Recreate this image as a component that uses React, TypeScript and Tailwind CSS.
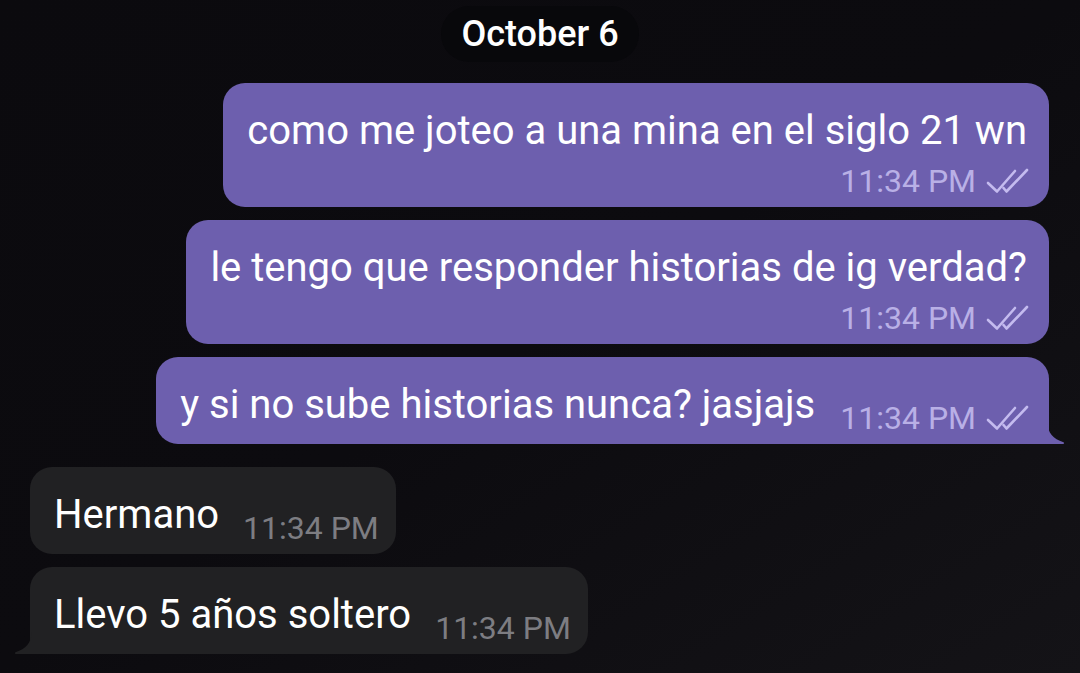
import type { ReactNode } from 'react'

type Side = 'out' | 'in'

function Checks() {
  return (
    <svg width="44" height="26" viewBox="0 0 44 26" fill="none" className="shrink-0">
      <path d="M2 15 L11 23.5 L29 3" stroke="#c4bbef" strokeWidth="2.6" strokeLinecap="round" strokeLinejoin="round" />
      <path d="M17.5 20 L20.5 23.5 L41 2" stroke="#c4bbef" strokeWidth="2.6" strokeLinecap="round" strokeLinejoin="round" />
    </svg>
  )
}

function Tail({ side }: { side: Side }) {
  if (side === 'out') {
    return (
      <svg width="18" height="22" viewBox="0 0 18 22" className="absolute bottom-0 right-[-16px]">
        <path d="M0 0 C1 11 6 17 16.5 20.2 C17.5 20.6 17.3 22 16 22 L0 22 Z" fill="#6d5fae" />
      </svg>
    )
  }
  return (
    <svg width="18" height="22" viewBox="0 0 18 22" className="absolute bottom-0 left-[-16px]">
      <path d="M18 0 C17 11 12 17 1.5 20.2 C0.5 20.6 0.7 22 2 22 L18 22 Z" fill="#212123" />
    </svg>
  )
}

function Bubble({ side, tail, children }: { side: Side; tail?: boolean; children: ReactNode }) {
  const base = side === 'out' ? 'bg-[#6d5fae]' : 'bg-[#212123]'
  const corners = tail
    ? side === 'out'
      ? 'rounded-[22px] rounded-br-none'
      : 'rounded-[22px] rounded-bl-none'
    : 'rounded-[22px]'
  return (
    <div className={`relative ${base} ${corners} pt-[25px] pb-[8px]`}>
      {children}
      {tail && <Tail side={side} />}
    </div>
  )
}

function OutTime() {
  return (
    <div className="flex items-center gap-[10px]">
      <span className="text-[32px] leading-[36px] text-[#b9b0e6]">11:34 PM</span>
      <Checks />
    </div>
  )
}

function InTime() {
  return <span className="ml-[24px] text-[32px] leading-[36px] text-[#7d7d82]">11:34 PM</span>
}

export default function App() {
  return (
    <div
      className="h-[673px] w-[1080px] overflow-hidden bg-gradient-to-br from-[#0b0a0e] via-[#0c0b0f] to-[#141317] text-white"
      style={{ fontFamily: 'Roboto, "Noto Sans", sans-serif' }}
    >
      <div className="flex justify-center pt-[6px]">
        <div className="rounded-full bg-[#08080b] px-[20px] py-[6px] text-[36px] font-medium leading-[44px]">
          October 6
        </div>
      </div>

      <div className="mt-[21px] flex flex-col items-end gap-[13px] pr-[31px]">
        <Bubble side="out">
          <div className="flex flex-col pl-[24px] pr-[19px]">
            <span className="pr-[3px] text-[40px] leading-[46px]">como me joteo a una mina en el siglo 21 wn</span>
            <div className="mt-[9px] flex justify-end">
              <OutTime />
            </div>
          </div>
        </Bubble>
        <Bubble side="out">
          <div className="flex flex-col pl-[24px] pr-[19px]">
            <span className="pr-[3px] text-[40px] leading-[46px]">le tengo que responder historias de ig verdad?</span>
            <div className="mt-[9px] flex justify-end">
              <OutTime />
            </div>
          </div>
        </Bubble>
        <Bubble side="out" tail>
          <div className="flex items-end pl-[24px] pr-[19px]">
            <span className="mb-[8px] text-[40px] leading-[46px]">y si no sube historias nunca? jasjajs</span>
            <div className="ml-[25px]">
              <OutTime />
            </div>
          </div>
        </Bubble>
      </div>

      <div className="mt-[23px] flex flex-col items-start gap-[13px] pl-[30px]">
        <Bubble side="in">
          <div className="flex items-end pl-[24px] pr-[17px]">
            <span className="mb-[8px] text-[40px] leading-[46px]">Hermano</span>
            <InTime />
          </div>
        </Bubble>
        <Bubble side="in" tail>
          <div className="flex items-end pl-[24px] pr-[17px]">
            <span className="mb-[8px] text-[40px] leading-[46px]">Llevo 5 años soltero</span>
            <InTime />
          </div>
        </Bubble>
      </div>
    </div>
  )
}
